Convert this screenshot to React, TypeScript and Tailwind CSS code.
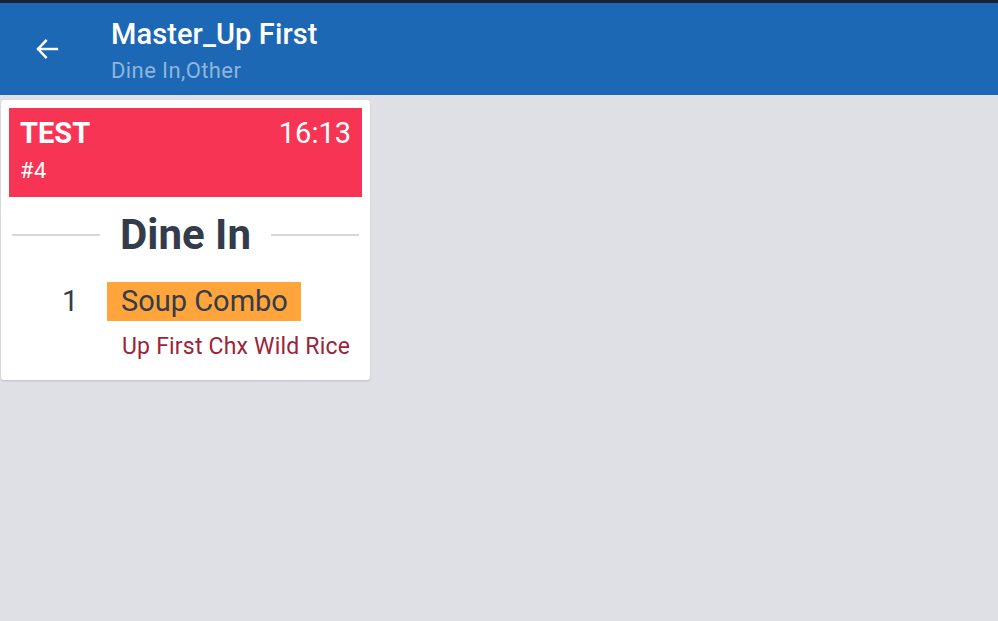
import React from "react";

export default function App() {
  return (
    <div className="w-[998px] h-[621px] bg-[#dfe0e5] flex flex-col overflow-hidden" style={{ fontFamily: "Roboto, 'Noto Sans', sans-serif" }}>
      <div className="h-[3px] bg-[#1a2233]" />
      <div className="h-[92px] bg-[#1c68b4] flex items-start">
        <div className="w-[111px] h-full flex items-center pl-[33px]">
          <svg width="28" height="28" viewBox="0 0 24 24" fill="none" stroke="white" strokeWidth="2.1">
            <path d="M20.5 12H4.5" strokeLinecap="square" />
            <path d="M11 5L4.3 12L11 19" strokeLinecap="square" strokeLinejoin="miter" />
          </svg>
        </div>
        <div className="flex flex-col pt-[14px]">
          <div className="text-white text-[29px] font-medium leading-[34px] tracking-[0.1px]">Master_Up First</div>
          <div className="text-[#8fb4de] text-[22px] leading-[28px] mt-[6px] tracking-[0.4px]">Dine In,Other</div>
        </div>
      </div>
      <div className="pt-[5px] pl-[1px]">
        <div className="w-[369px] bg-white rounded-[3px] shadow-[0_1px_2px_rgba(0,0,0,0.15)] px-[8px] pt-[8px] pb-[19px]">
          <div className="bg-[#f73453] h-[89px] px-[11px] pt-[8px] text-white">
            <div className="flex justify-between items-start">
              <span className="text-[29px] font-bold leading-[34px]">TEST</span>
              <span className="text-[29px] leading-[34px]">16:13</span>
            </div>
            <div className="text-[22px] leading-[26px] mt-[8px] tracking-[0.5px]">#4</div>
          </div>
          <div className="flex items-center mt-[13px] px-[3px]">
            <div className="flex-1 h-[2px] bg-[#d6d7da]" />
            <div className="px-[20px] text-[42px] font-bold text-[#343b4b] leading-[50px]">Dine In</div>
            <div className="flex-1 h-[2px] bg-[#d6d7da]" />
          </div>
          <div className="flex items-center mt-[22px]">
            <div className="w-[98px] pl-[53px] text-[29px] text-[#343b4b] leading-[39px]">1</div>
            <div className="bg-[#ffa53b] h-[39px] pl-[14px] pr-[13px] flex items-center text-[29px] text-[#343b4b]">Soup Combo</div>
          </div>
          <div className="pl-[113px] mt-[12px] text-[23px] text-[#9d2438] leading-[28px] tracking-[0.2px]">Up First Chx Wild Rice</div>
        </div>
      </div>
    </div>
  );
}
